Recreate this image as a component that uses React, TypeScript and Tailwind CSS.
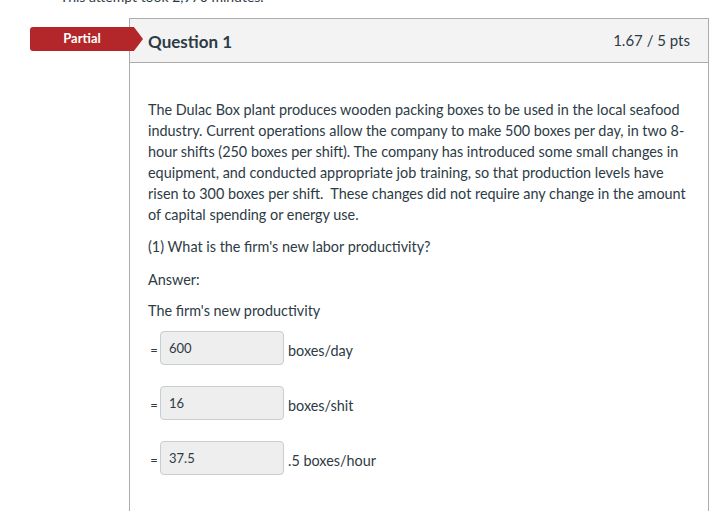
const answers = [
  { value: "600", unit: "boxes/day" },
  { value: "16", unit: "boxes/shit" },
  { value: "37.5", unit: ".5 boxes/hour" },
];

export default function App() {
  return (
    <div className="h-screen overflow-hidden bg-white font-['Lato','Open_Sans',sans-serif] text-[#2d3b45]">
      <div className="h-[18px] overflow-hidden pl-[60px]">
        <p className="-mt-[13px] text-[14px] leading-[20px]">This attempt took 2,970 minutes.</p>
      </div>

      <div className="relative ml-[129px] mr-[8px] min-h-[493px] border border-b-0 border-[#ababab]">
        <div className="absolute left-[-100px] top-[8px] flex h-[24px] w-[113px] items-center rounded-l-[3px] bg-[#b3272a] pr-[9px] [clip-path:polygon(0_0,92%_0,100%_50%,92%_100%,0_100%)]">
          <span className="w-full text-center text-[13px] font-bold text-white">Partial</span>
        </div>

        <div className="flex h-[44px] items-center justify-between border-b border-[#ababab] bg-[#f3f3f3] px-[18px]">
          <h2 className="pt-[2px] text-[17px] font-bold">Question 1</h2>
          <span className="text-[15px]">1.67 / 5 pts</span>
        </div>

        <div className="px-[18px] pt-[36px] text-[14.4px] leading-[21px]">
          <p>
            The Dulac Box plant produces wooden packing boxes to be used in the local seafood industry. Current
            operations allow the company to make 500 boxes per day, in two 8-hour shifts (250 boxes per shift). The
            company has introduced some small changes in equipment, and conducted appropriate job training, so that
            production levels have risen to 300 boxes per shift.&nbsp; These changes did not require any change in
            the amount of capital spending or energy use.
          </p>
          <p className="mt-[11px]">(1) What is the firm's new labor productivity?</p>
          <p className="mt-[12px]">Answer:</p>
          <p className="mt-[10px]">The firm's new productivity</p>

          <div className="mt-[10px] flex flex-col gap-[21px]">
            {answers.map((a) => (
              <div key={a.value} className="flex items-center">
                <span className="mt-[5px] w-[12px] text-center text-[13px]">=</span>
                <div className="flex h-[34px] w-[124px] items-start rounded-[4px] border border-[#c7cdd1] bg-[#eeeeee] px-[8px] pt-[7px] text-[13px] leading-[18px]">
                  {a.value}
                </div>
                <span className="ml-[4px] mt-[5px]">{a.unit}</span>
              </div>
            ))}
          </div>
        </div>
      </div>
    </div>
  );
}
